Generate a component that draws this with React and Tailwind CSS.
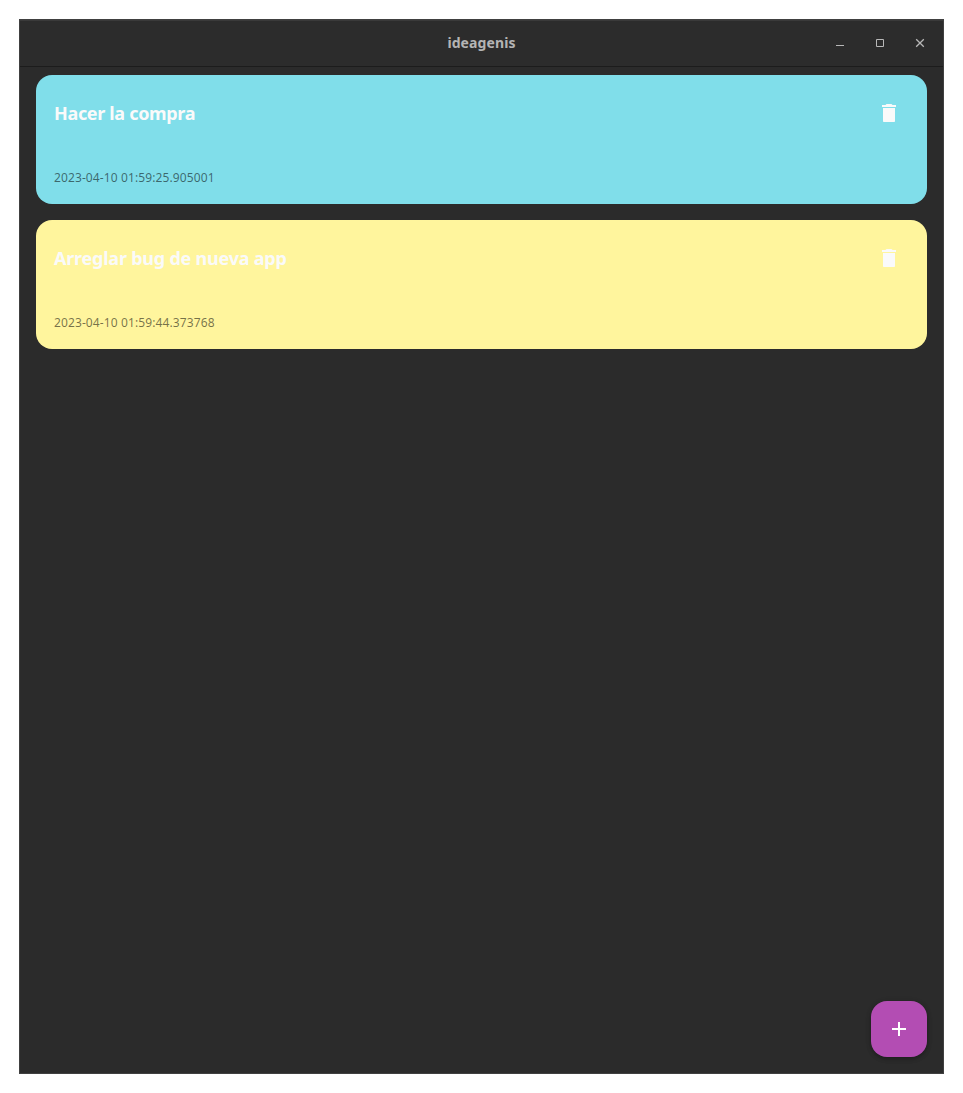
const NOTES = [
  {
    title: 'Hacer la compra',
    date: '2023-04-10 01:59:25.905001',
    card: 'bg-[#80deea]',
    spacing: 'tracking-[-0.33px]',
  },
  {
    title: 'Arreglar bug de nueva app',
    date: '2023-04-10 01:59:44.373768',
    card: 'bg-[#fff59d]',
    spacing: 'tracking-[-0.22px]',
  },
];

function TrashIcon() {
  return (
    <svg className="size-6" viewBox="0 0 24 24" fill="currentColor" aria-hidden="true">
      <path d="M6 20c0 .55.45 1 1 1h10c.55 0 1-.45 1-1V7H6zM19 4h-3.5l-1-1h-5l-1 1H5v2h14z" />
    </svg>
  );
}

function Note({ note }) {
  return (
    <article className={`flex h-[129px] flex-col justify-between rounded-2xl pt-[26px] pr-[26px] pb-[18px] pl-[18px] ${note.card}`}>
      <div className="flex h-6 items-center justify-between text-[#fafafa]">
        <h2 className={`text-[18px] leading-6 font-bold whitespace-nowrap ${note.spacing}`}>{note.title}</h2>
        <button aria-label="Eliminar">
          <TrashIcon />
        </button>
      </div>
      <p className="text-[12px] leading-4 tracking-[0.11px] whitespace-nowrap text-black/54">{note.date}</p>
    </article>
  );
}

export default function App() {
  return (
    <div className="h-[1093px] bg-white p-[19px] font-['Noto_Sans',sans-serif]">
      <main className="flex h-[1055px] w-[925px] flex-col border border-[#404040] bg-[#2b2b2b]">
        <header className="grid h-[47px] shrink-0 grid-cols-[1fr_auto_1fr] items-center border-t border-b border-t-[#3a3a3a] border-b-[#1c1c1c] bg-[#2c2c2c] pb-px">
          <span />
          <h1 className="text-[14px] leading-5 font-bold tracking-[0.1px] text-[#b4b4b4]">ideagenis</h1>
          <div className="flex justify-end gap-6 pr-[15px] text-[#b8b8b8]">
            <button className="size-4" aria-label="Minimizar">
              <svg viewBox="0 0 16 16" className="size-4" fill="none" stroke="currentColor">
                <path d="M4 10.5h8" />
              </svg>
            </button>
            <button className="size-4" aria-label="Maximizar">
              <svg viewBox="0 0 16 16" className="size-4" fill="none" stroke="currentColor">
                <path d="M4.5 4.5h7v7h-7z" />
              </svg>
            </button>
            <button className="size-4" aria-label="Cerrar">
              <svg viewBox="0 0 16 16" className="size-4" fill="none" stroke="currentColor" strokeWidth="1.3">
                <path d="M4.2 4.2l7.6 7.6M11.8 4.2l-7.6 7.6" />
              </svg>
            </button>
          </div>
        </header>
        <section className="flex flex-1 flex-col gap-4 px-4 pt-2">
          {NOTES.map((note) => (
            <Note key={note.title} note={note} />
          ))}
        </section>
        <footer className="flex justify-end pr-4 pb-4">
          <button
            aria-label="Agregar"
            className="flex size-14 items-center justify-center rounded-2xl bg-[#b34db3] text-white shadow-[0_2px_4px_rgba(0,0,0,0.25),0_1px_6px_rgba(0,0,0,0.1)]"
          >
            <svg className="size-6" viewBox="0 0 24 24" fill="currentColor" aria-hidden="true">
              <path d="M19 13h-6v6h-2v-6H5v-2h6V5h2v6h6z" />
            </svg>
          </button>
        </footer>
      </main>
    </div>
  );
}
